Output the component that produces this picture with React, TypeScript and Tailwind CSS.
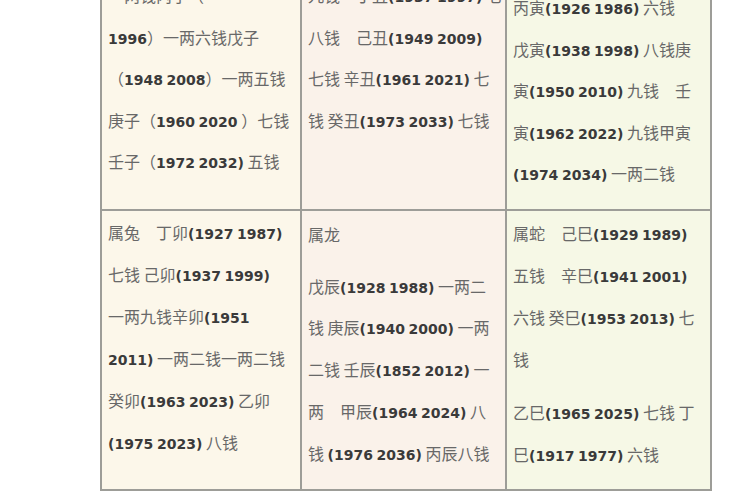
type Para = { lines: string[]; className?: string };

interface CellProps {
  bg: string;
  pad: string;
  leading: string;
  paras: Para[];
}

// digit runs get the bold latin face, everything else stays CJK
function Line({ text }: { text: string }) {
  const parts = text.split(/([0-9()]+)/);
  return (
    <div className="whitespace-pre">
      {parts.map((p, i) =>
        /^[0-9()]+$/.test(p) ? (
          <span
            key={i}
            className="font-['DejaVu_Sans',sans-serif] text-[14px] leading-none font-bold text-[#3a3a3a]"
          >
            {p}
          </span>
        ) : (
          <span key={i}>{p}</span>
        )
      )}
    </div>
  );
}

function Cell({ bg, pad, leading, paras }: CellProps) {
  return (
    <div className={`${bg} ${pad} ${leading} pl-[6px] overflow-hidden`}>
      {paras.map((para, i) => (
        <div key={i} className={para.className}>
          {para.lines.map((l, j) => (
            <Line key={j} text={l} />
          ))}
        </div>
      ))}
    </div>
  );
}

export default function App() {
  return (
    <div className="w-[750px] h-[500px] overflow-hidden bg-white font-['Noto_Sans_CJK_SC',sans-serif] text-[16px] text-[#686868]">
      <div className="ml-[100px] mt-[-40px] w-[612px] grid grid-cols-[198px_203px_203px] grid-rows-[247px_278px] gap-[2px] p-[2px] bg-[#9d9d98]">
        <Cell
          bg="bg-[#fcf7ea]"
          pad="pt-[13px]"
          leading="leading-[41.5px]"
          paras={[
            {
              lines: [
                "一两钱丙子（",
                "1996）一两六钱戊子",
                "（1948 2008）一两五钱",
                "庚子（1960 2020 ）七钱",
                "壬子（1972 2032) 五钱",
              ],
            },
          ]}
        />
        <Cell
          bg="bg-[#faf2ea]"
          pad="pt-[13px]"
          leading="leading-[41.5px]"
          paras={[
            {
              lines: [
                "九钱　丁丑(1937 1997) 七",
                "八钱　己丑(1949 2009)",
                "七钱 辛丑(1961 2021) 七",
                "钱 癸丑(1973 2033) 七钱",
              ],
            },
          ]}
        />
        <Cell
          bg="bg-[#f6f8e6]"
          pad="pt-[25px]"
          leading="leading-[41.5px]"
          paras={[
            {
              lines: [
                "丙寅(1926 1986) 六钱",
                "戊寅(1938 1998) 八钱庚",
                "寅(1950 2010) 九钱　壬",
                "寅(1962 2022) 九钱甲寅",
                "(1974 2034) 一两二钱",
              ],
            },
          ]}
        />
        <Cell
          bg="bg-[#fcf7ea]"
          pad="pt-0"
          leading="leading-[42px]"
          paras={[
            {
              lines: [
                "属兔　丁卯(1927 1987)",
                "七钱 己卯(1937 1999)",
                "一两九钱辛卯(1951",
                "2011) 一两二钱一两二钱",
                "癸卯(1963 2023) 乙卯",
                "(1975 2023) 八钱",
              ],
            },
          ]}
        />
        <Cell
          bg="bg-[#faf2ea]"
          pad="pt-[3px]"
          leading="leading-[41.7px]"
          paras={[
            { lines: ["属龙"], className: "mb-[10px]" },
            {
              lines: [
                "戊辰(1928 1988) 一两二",
                "钱 庚辰(1940 2000) 一两",
                "二钱 壬辰(1852 2012) 一",
                "两　甲辰(1964 2024) 八",
                "钱 (1976 2036) 丙辰八钱",
              ],
            },
          ]}
        />
        <Cell
          bg="bg-[#f6f8e6]"
          pad="pt-px"
          leading="leading-[42px]"
          paras={[
            {
              lines: [
                "属蛇　己巳(1929 1989)",
                "五钱　辛巳(1941 2001)",
                "六钱 癸巳(1953 2013) 七",
                "钱",
              ],
            },
            {
              lines: ["乙巳(1965 2025) 七钱 丁", "巳(1917 1977) 六钱"],
              className: "mt-[11px]",
            },
          ]}
        />
      </div>
    </div>
  );
}
